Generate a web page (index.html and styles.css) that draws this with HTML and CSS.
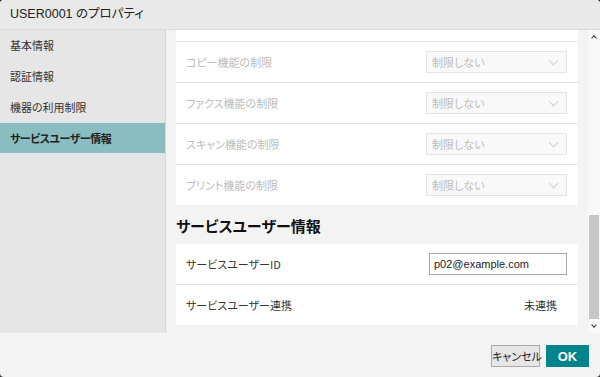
FILE: index.html
```html
<!DOCTYPE html>
<html lang="ja">
<head>
    <meta charset="UTF-8" />
    <title>USER0001 のプロパティ</title>
    <link rel="stylesheet" href="styles.css">
</head>
<body>
    <div class="dialog">
        <header class="title-bar">USER0001 のプロパティ</header>
        <div class="main">
            <nav class="sidebar">
                <div class="nav-item">基本情報</div>
                <div class="nav-item">認証情報</div>
                <div class="nav-item">機器の利用制限</div>
                <div class="nav-item active">サービスユーザー情報</div>
            </nav>
            <div class="content">
                <div class="card">
                    <div class="card-top"></div>
                    <div class="row disabled">
                        <span class="label">コピー機能の制限</span>
                        <div class="select">制限しない<span class="chevron"></span></div>
                    </div>
                    <div class="row disabled">
                        <span class="label">ファクス機能の制限</span>
                        <div class="select">制限しない<span class="chevron"></span></div>
                    </div>
                    <div class="row disabled">
                        <span class="label">スキャン機能の制限</span>
                        <div class="select">制限しない<span class="chevron"></span></div>
                    </div>
                    <div class="row disabled">
                        <span class="label">プリント機能の制限</span>
                        <div class="select">制限しない<span class="chevron"></span></div>
                    </div>
                </div>
                <h2 class="section-title">サービスユーザー情報</h2>
                <div class="card">
                    <div class="row first">
                        <span class="label">サービスユーザーID</span>
                        <input class="text-input" type="text" value="p02@example.com">
                    </div>
                    <div class="row">
                        <span class="label">サービスユーザー連携</span>
                        <span class="status">未連携</span>
                    </div>
                </div>
            </div>
            <div class="scrollbar">
                <span class="arrow up"></span>
                <div class="track"><div class="thumb"></div></div>
                <span class="arrow down"></span>
            </div>
        </div>
        <footer class="footer">
            <button class="btn cancel">キャンセル</button>
            <button class="btn ok">OK</button>
        </footer>
    </div>
</body>
</html>
```

FILE: styles.css
```css
body {
    margin: 0;
    background: #333;
    font-family: "Noto Sans CJK JP", "Noto Sans", sans-serif;
    font-feature-settings: "palt";
    color: #333;
}
.dialog {
    width: 600px;
    height: 377px;
    display: flex;
    flex-direction: column;
    background: #f3f3f3;
    border-radius: 4px;
    overflow: hidden;
}
.title-bar {
    height: 29px;
    line-height: 29px;
    padding-left: 10px;
    background: #e9e9e9;
    border-bottom: 1px solid #dadada;
    font-family: "Liberation Sans", "Noto Sans CJK JP", sans-serif;
    font-size: 12.5px;
    color: #222;
}
.main {
    display: flex;
    height: 303px;
}
.sidebar {
    width: 165px;
    background: #e6e6e6;
    border-right: 1px solid #d6d6d6;
}
.nav-item {
    height: 30px;
    line-height: 30px;
    padding-left: 10px;
    font-size: 11px;
    border-bottom: 1px solid #e3e3e3;
}
.nav-item.active {
    background: #8abdc1;
    font-weight: 700;
    letter-spacing: -0.5px;
    color: #222;
}
.content {
    flex: 1;
    padding: 0 10px 0 10px;
}
.card {
    background: #fff;
}
.card-top {
    height: 11px;
}
.row {
    height: 40px;
    display: flex;
    align-items: center;
    justify-content: space-between;
    padding: 0 11px 0 10px;
    border-top: 1px solid #e2e2e2;
    font-size: 11px;
}
.row.first {
    border-top: none;
}
.row.disabled .label {
    color: #bcbcbc;
}
.select {
    width: 134px;
    height: 20px;
    line-height: 20px;
    padding-left: 5px;
    border: 1px solid #e4e4e4;
    background: #f9f9f9;
    color: #bdbdbd;
    font-size: 11px;
    display: flex;
    justify-content: space-between;
    align-items: center;
}
.chevron {
    width: 6px;
    height: 6px;
    margin: 0 9px 4px 0;
    border-right: 1px solid #d0d0d0;
    border-bottom: 1px solid #d0d0d0;
    transform: rotate(45deg);
}
.section-title {
    margin: 0;
    height: 39px;
    line-height: 42px;
    font-size: 15px;
    font-weight: 700;
    color: #111;
}
.text-input {
    width: 132px;
    height: 20px;
    padding: 0 0 0 4px;
    border: 1px solid #a8a8a8;
    font-family: "Liberation Sans", "Noto Sans CJK JP", sans-serif;
    font-size: 11px;
    color: #222;
    box-sizing: content-box;
}
.status {
    padding-right: 10px;
    color: #333;
}
.scrollbar {
    width: 12px;
    background: #f8f8f8;
    display: flex;
    flex-direction: column;
    align-items: center;
}
.track {
    flex: 1;
    width: 12px;
    display: flex;
    flex-direction: column;
    justify-content: flex-end;
    padding-bottom: 2px;
}
.thumb {
    height: 104px;
    margin: 0 1px;
    background: #c6c6c6;
}
.arrow {
    width: 3px;
    height: 3px;
    border-left: 1px solid #333;
    border-top: 1px solid #333;
}
.arrow.up {
    margin: 6px 0 4px;
    transform: rotate(45deg);
}
.arrow.down {
    margin: 2px 0 6px;
    transform: rotate(225deg);
}
.footer {
    flex: 1;
    display: flex;
    justify-content: flex-end;
    align-items: flex-start;
    gap: 6px;
    padding: 12px 11px 0 0;
}
.btn {
    height: 22px;
    font-family: "Noto Sans CJK JP", sans-serif;
    font-feature-settings: "palt";
    font-size: 11px;
    padding: 0;
    white-space: nowrap;
    cursor: pointer;
}
.btn.cancel {
    width: 49px;
    background: #e6e6e6;
    border: 1px solid #a9a9a9;
    color: #222;
}
.btn.ok {
    width: 43px;
    background: #00838a;
    border: none;
    color: #fff;
    font-family: "Liberation Sans", sans-serif;
    font-size: 13px;
    font-weight: 700;
}
```
